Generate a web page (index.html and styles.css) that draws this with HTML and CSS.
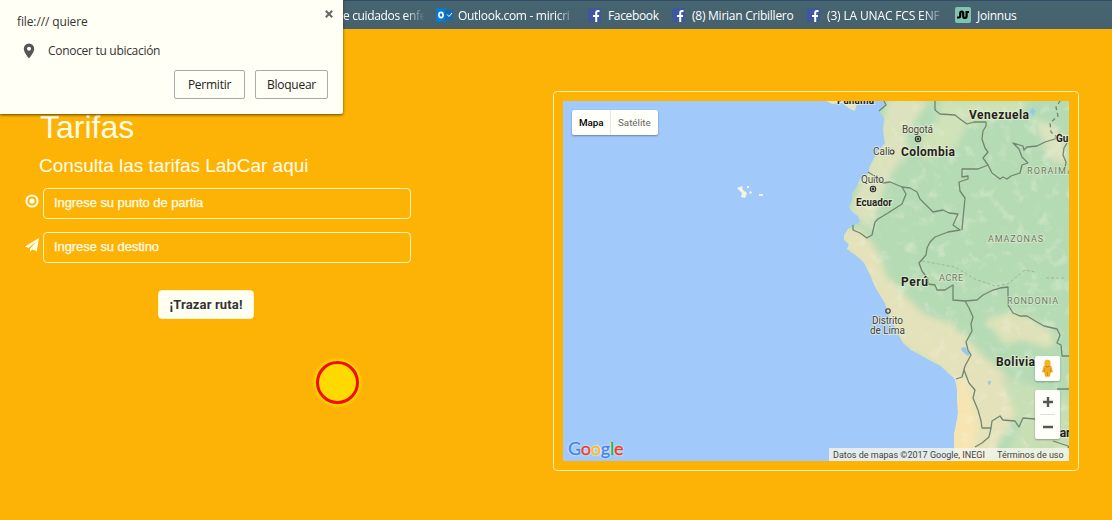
FILE: index.html
```html
<!DOCTYPE html>
<html lang="es">
<head>
<meta charset="utf-8">
<title>LabCar - Tarifas</title>
<link rel="stylesheet" href="styles.css">
</head>
<body>
<nav class="bookmarks">
  <span class="mark mark-nursing fade">e cuidados enfe</span>
  <span class="mark mark-outlook"><svg class="ico-outlook" viewBox="0 0 17 14"><rect width="10" height="14" fill="#0879cf"/><rect x="9" y="2" width="8" height="10" fill="#126ab2"/><ellipse cx="5" cy="7" rx="2.1" ry="2.6" fill="none" stroke="#fff" stroke-width="1.6"/><path d="M11 6.500l2 2 3-3.500" fill="none" stroke="#fff"/></svg><span class="fade">Outlook.com - miricri</span></span>
  <span class="mark mark-fb"><svg class="ico-fb" viewBox="0 0 13 14"><rect width="13" height="14" fill="#3f579b"/><path d="M11.500 3H10Q8.200 3 8.200 5V14M5 8H11" fill="none" stroke="#fff" stroke-width="2"/></svg><span>Facebook</span></span>
  <span class="mark mark-mirian"><svg class="ico-fb" viewBox="0 0 13 14"><rect width="13" height="14" fill="#3f579b"/><path d="M11.500 3H10Q8.200 3 8.200 5V14M5 8H11" fill="none" stroke="#fff" stroke-width="2"/></svg><span>(8) Mirian Cribillero</span></span>
  <span class="mark mark-unac"><svg class="ico-fb" viewBox="0 0 13 14"><rect width="13" height="14" fill="#3f579b"/><path d="M11.500 3H10Q8.200 3 8.200 5V14M5 8H11" fill="none" stroke="#fff" stroke-width="2"/></svg><span class="fade">(3) LA UNAC FCS ENF</span></span>
  <span class="mark mark-joinnus"><svg class="ico-join" viewBox="0 0 16 16"><rect width="16" height="16" rx="2" fill="#82c4b4"/><path d="M2 10.500H4Q5.200 10.500 5.200 9V6.500Q5.200 4.500 6.700 4.500T8.200 6.500V9Q8.200 11 9.900 11T11.600 9V5H14" fill="none" stroke="#000" stroke-width="2.200"/></svg><span>Joinnus</span></span>
</nav>

<main class="page">
  <section class="rates">
    <h1 class="title">Tarifas</h1>
    <p class="subtitle">Consulta las tarifas LabCar aqui</p>
    <div class="field">
      <svg class="field-icon" viewBox="0 0 14 14"><circle cx="7" cy="7" r="5.600" fill="none" stroke="#fffde5" stroke-width="2"/><circle cx="7" cy="7" r="2.600" fill="#fffde5"/></svg>
      <div class="input">Ingrese su punto de partia</div>
    </div>
    <div class="field">
      <svg class="field-icon" viewBox="0 0 14 14"><path d="M14 0L0 8.500L3.500 10L11.500 3.500L5 10.700V14L7.200 11.400L11.800 13.300Z" fill="#fffde5"/></svg>
      <div class="input">Ingrese su destino</div>
    </div>
    <button class="route">¡Trazar ruta!</button>
  </section>

  <section class="map-frame">
    <div class="map">
      <svg class="map-art" viewBox="563 101 506 360">
        <defs>
          <path id="land" d="M883 101L885 105L879 111L884 118L883 131L885 143L878 151L873 160L869 168L869 173L860 179L857 186L852 193L852 200L849 207L852 212L858 216L860 222L853 226L848 229L844 235L844 240L849 244L847 249L858 257L864 263L870 275L873 282L878 292L885 303L888 313L892 321L897 332L903 343L911 350L922 356L931 361L941 366L949 374L955 379L957 390L957 400L958 413L956 425L954 434L954 461H1069V101Z"/>
          <clipPath id="landclip"><use href="#land"/></clipPath>
          <filter id="soft" x="-20%" y="-20%" width="140%" height="140%"><feGaussianBlur stdDeviation="3"/></filter>
          <filter id="rough" x="0" y="0" width="100%" height="100%"><feTurbulence type="fractalNoise" baseFrequency="0.075" numOctaves="5" seed="7"/><feColorMatrix values="0 0 0 0 .92  0 0 0 0 .93  0 0 0 0 .78  4 0 0 0 -2.200"/></filter>
        </defs>
        <rect x="563" y="101" width="506" height="360" fill="#a1c9f9"/>
        <use href="#land" fill="#b5dbb5"/>
        <g clip-path="url(#landclip)">
          <g filter="url(#soft)">
            <path d="M890 95L930 100L905 135L910 150L890 175L880 200L870 230L850 210L875 150Z" fill="#dce2bd"/>
            <path d="M940 101H1030L1020 112L985 121L968 123L955 150L925 160L918 140L938 120Z" fill="#cfe2b8"/>
            <path d="M840 225L862 230L880 255L886 275L905 295L925 315L948 322L967 338L982 355L1010 378L1022 405L1010 425L985 465H945L955 380L895 340L865 270L840 245Z" fill="#e4e2ba"/>
            <path d="M985 320L1010 312L1030 318L1055 335L1050 348L1020 340L1005 345Z" fill="#dfe2b8"/>
            <path d="M1033 120L1055 125L1066 145L1068 165L1050 160L1043 140Z" fill="#dce3bf"/>
            <path d="M1000 375L1045 390L1069 400V461H1005L1020 425Z" fill="#c8dfb6"/>
            <path d="M954 379L967 383L978 425L971 461H948Z" fill="#f6e5b2"/>
          </g>
          <rect x="843" y="101" width="226" height="360" filter="url(#rough)" opacity=".3"/>
        </g>
        <path d="M826 101L832 104L842 103L850 109L855 111L856 106L863 101Z" fill="#e3e8c4"/>
        <path d="M737 188L742 186L743 190L747 193L745 198L741 197L742 193ZM739 186L741 187ZM750 191L752 192L751 194L749 193ZM747 186H749V188H747ZM759 194H763V196H759Z" fill="#f4f7dd"/>
        <path d="M961 348L965 347L970 354L968 356L962 351ZM988 381H991L990 385L988 384ZM1032 108L1036 111L1033 116L1030 112Z" fill="#98c5f2"/>
        <g class="borders">
          <path d="M879 111L886 105L884 101M935 101V110L940 114L955 115L960 119L967 124L974 122L986 122L986 126L983 131L982 139L985 148L988 152L983 158L988 165L978 169L962 169V177L968 176V179L959 182L960 191L965 198L963 219L962 230"/>
          <path d="M988 165L992 173L1000 179L1003 177L1007 179L1011 176L1020 173L1022 165L1028 163L1022 157L1019 149L1013 143L1023 146L1024 150L1027 147L1037 146L1045 142L1055 139L1060 133M1067 143L1064 148L1063 155L1066 162L1065 168"/>
          <path d="M868 172L876 177L883 183L890 182L895 184L902 187L910 188L917 192L920 199L927 206L933 212L943 210L949 213L958 214L953 225L960 230L948 232L935 237L930 242L927 248L926 255L919 263L922 271L928 279L928 284L935 285L937 290H945L953 285V300L965 301L969 308L973 317L971 324L972 331L966 342L968 350L971 355L965 366L962 377L956 379"/>
          <path d="M902 187L906 194L902 204L888 213L878 219L875 222L872 235L867 238L860 233L853 230V225M965 301L977 300L983 295L993 290L1000 288L1008 287L1008 305L1013 313L1020 316H1027L1037 322L1044 326L1057 329L1060 335L1057 343L1061 345L1062 356H1069"/>
          <path d="M964 370L969 383L975 390L973 398L978 410L981 421L982 428H991L989 437L982 443L975 447M991 428L992 421L1000 416L1003 420L1015 421L1019 427L1023 418L1035 419M1057 389H1069M1053 441L1068 446L1069 450"/>
          <path stroke-dasharray="4 3" d="M1058 138L1051 132L1050 123L1058 116L1056 107L1060 101"/>
          <path class="state" d="M922 261L955 267L975 279L995 286L1008 284L1025 270L1035 272M1046 278H1066"/>
        </g>
        <g class="dots"><circle cx="918" cy="139" r="2.700"/><circle cx="918" cy="139" r=".9"/><circle cx="873" cy="189" r="2.700"/><circle cx="873" cy="189" r=".9"/><circle cx="892" cy="152" r="2"/><circle cx="888" cy="311" r="2.200"/></g>
        <g class="labels">
          <g class="country">
            <text x="969" y="119" textLength="60">Venezuela</text>
            <text x="901" y="156" textLength="54">Colombia</text>
            <text x="901" y="286" textLength="27">Perú</text>
            <text x="996" y="366" textLength="39">Bolivia</text>
            <text class="small" x="856" y="206" textLength="36">Ecuador</text>
            <text class="small" x="837" y="104" textLength="37">Panamá</text>
            <text class="small" x="1056" y="142">Gu</text>
            <text x="1052" y="437">Par</text>
          </g>
          <g class="city">
            <text x="902" y="133" textLength="31">Bogotá</text>
            <text x="873" y="155" textLength="17">Cali</text>
            <text x="861" y="183" textLength="23">Quito</text>
            <text x="872" y="324" textLength="31">Distrito</text>
            <text x="870" y="334" textLength="35">de Lima</text>
          </g>
          <g class="region">
            <text x="1027" y="174" textLength="46">RORAIMA</text>
            <text x="988" y="242" textLength="55">AMAZONAS</text>
            <text x="939" y="281" textLength="24">ACRE</text>
            <text x="1007" y="304" textLength="51">RONDONIA</text>
          </g>
        </g>
      </svg>
      <div class="map-type"><span class="type-map">Mapa</span><span class="type-sat">Satélite</span></div>
      <div class="map-controls">
        <div class="pegman"><svg viewBox="0 0 14 20"><circle cx="7" cy="4" r="3.400" fill="#f5b51e"/><path d="M3 7H11L13 14H10.500L9.500 19H4.500L3.500 14H1Z" fill="#f3ac20"/><path d="M4 7Q7 10 10 7" fill="none" stroke="#c97918"/><path d="M4 10L3.500 14M10 10L10.500 14M7 14V18" stroke="#d58a13"/></svg></div>
        <div class="zoom"><svg viewBox="0 0 25 49"><path d="M8 12H18M13 7V17M8 37H18" stroke="#555" stroke-width="2.400"/><path d="M5 24.500H20" stroke="#ddd"/></svg></div>
      </div>
      <div class="google"><span class="g-blue">G</span><span class="g-red">o</span><span class="g-yellow">o</span><span class="g-blue">g</span><span class="g-green">l</span><span class="g-red">e</span></div>
      <div class="credits"><span class="credit-data">Datos de mapas ©2017 Google, INEGI</span><span class="credit-terms">Términos de uso</span></div>
    </div>
  </section>
</main>

<aside class="permission">
  <svg class="close" viewBox="0 0 8 8"><path d="M.8.8L7.200 7.200M7.200.8L.8 7.200" stroke="#666" stroke-width="2"/></svg>
  <p class="origin">file:/// quiere</p>
  <p class="request"><svg class="pin" viewBox="0 0 12 16"><path fill-rule="evenodd" d="M6 .5A5.200 5.200 0 0 0 .8 5.700C.8 9.500 6 15.500 6 15.500S11.200 9.500 11.200 5.700A5.200 5.200 0 0 0 6 .5ZM6 3.700A2 2 0 1 1 6 7.700A2 2 0 1 1 6 3.700Z" fill="#555"/></svg><span>Conocer tu ubicación</span></p>
  <div class="actions"><button class="allow">Permitir</button><button class="block">Bloquear</button></div>
</aside>
<div class="cursor-ring"></div>
</body>
</html>
```
FILE: styles.css
```css
* { box-sizing: border-box; }
body { margin: 0; width: 1112px; height: 520px; overflow: hidden; position: relative; background: #fdb206; font-family: "Liberation Sans", Arial, sans-serif; color: #fffde8; }
h1, p { margin: 0; }
svg { display: block; flex: none; }
button { padding: 0; cursor: pointer; }

.bookmarks { height: 29px; padding: 0 0 0 343px; display: flex; align-items: center; background: linear-gradient(#456670, #47606e); border-top: 1px solid #354a68; font: 12px "Open Sans", "Noto Sans", sans-serif; letter-spacing: -.15px; color: #fff; white-space: nowrap; }
.mark { display: flex; align-items: center; flex: none; overflow: hidden; }
.fade { overflow: hidden; -webkit-mask-image: linear-gradient(to right, #000 calc(100% - 20px), transparent); mask-image: linear-gradient(to right, #000 calc(100% - 20px), transparent); }
.mark-nursing { width: 82px; margin-right: 11px; letter-spacing: -.35px; }
.mark-outlook { width: 152px; gap: 5px; }
.mark-outlook .fade { width: 118px; letter-spacing: -.3px; }
.mark-fb { width: 84px; gap: 7px; letter-spacing: -.35px; }
.mark-mirian { width: 135px; gap: 7px; letter-spacing: -.25px; }
.mark-unac { width: 148px; gap: 7px; }
.mark-unac .fade { width: 117px; }
.mark-joinnus { gap: 6px; letter-spacing: -.25px; }
.ico-outlook { width: 17px; height: 14px; }
.ico-fb { width: 13px; height: 14px; }
.ico-join { width: 16px; height: 16px; }

.page { display: grid; grid-template-columns: 553px 526px; align-items: start; }
.rates { padding: 79px 0 0 25px; display: flex; flex-direction: column; align-items: flex-start; }
.title { margin-left: 15px; font-size: 32px; line-height: 38px; font-weight: 400; }
.subtitle { margin: 8px 0 10px 14px; font-size: 19px; line-height: 24px; letter-spacing: -.03px; }
.field { display: flex; gap: 4px; margin-bottom: 13px; }
.field-icon { width: 14px; height: 14px; margin-top: 6px; }
.input { width: 368px; height: 31px; padding: 0 10px; border: 1px solid #fff6b0; border-radius: 4px; font-size: 13px; line-height: 28px; letter-spacing: -.07px; -webkit-text-stroke: .25px #fffde8; }
.route { width: 96px; height: 29px; margin: 14px 0 0 133px; border: 1px solid #fff5c2; border-radius: 4px; background: #fffff2; color: #333; font: bold 13px Roboto, sans-serif; letter-spacing: .15px; }

.map-frame { height: 380px; margin-top: 62px; padding: 9px; border: 1px solid #fff3a8; border-radius: 4px; }
.map { position: relative; width: 506px; height: 360px; overflow: hidden; font-family: Roboto, sans-serif; }
.map-art { width: 506px; height: 360px; }
.borders { fill: none; stroke: #71866f; stroke-width: 1.3; stroke-linejoin: round; }
.borders .state { stroke: #94ae95; stroke-width: .8; stroke-dasharray: 3 2; }
.dots { fill: none; stroke: #333; stroke-width: 1.1; }
.labels { paint-order: stroke; stroke: #eef1d5; stroke-opacity: .6; stroke-width: 2; fill: #222; }
.country { font: bold 12px Roboto, sans-serif; }
.small { font-size: 10px; }
.city { font: 10px Roboto, sans-serif; fill: #444; }
.region { font: 9px Roboto, sans-serif; fill: #687a69; stroke-width: 1.5; }

.map-type { position: absolute; left: 9px; top: 9px; width: 86px; height: 25px; display: flex; align-items: center; background: #fffffa; border-radius: 2px; box-shadow: 0 1px 2px rgba(0, 0, 0, .35); font-size: 9.8px; color: #666; }
.type-map { width: 39px; height: 25px; padding-left: 7px; border-right: 1px solid #e7e7e7; line-height: 25px; font-weight: 500; color: #000; }
.type-sat { padding-left: 7px; }
.map-controls { position: absolute; left: 472px; top: 255px; display: grid; gap: 9px; }
.pegman, .zoom { width: 25px; background: #fffffa; border-radius: 2px; box-shadow: 0 1px 2px rgba(0, 0, 0, .3); }
.pegman { height: 25px; padding: 3px 6px; }
.pegman svg { width: 13px; height: 19px; }
.zoom { height: 49px; }
.google { position: absolute; left: 5px; bottom: 2px; font: 18px/22px Lato, sans-serif; letter-spacing: -.2px; -webkit-text-stroke: .5px; text-shadow: 0 0 1px #fff, 0 0 2px #fff, 0 0 2px #fff; }
.g-blue { color: #4285f4; }
.g-red { color: #df4335; }
.g-yellow { color: #f5b91d; }
.g-green { color: #34a853; }
.credits { position: absolute; right: 0; bottom: 0; width: 240px; height: 13px; padding-left: 4px; display: flex; align-items: center; background: rgba(245, 245, 234, .8); color: #444; font-size: 9px; white-space: nowrap; }
.credit-data { width: 164px; }

.permission { position: absolute; left: 0; top: 0; width: 343px; height: 114px; padding: 13px 15px 0 17px; background: #fffff5; border-radius: 0 0 2px 0; box-shadow: 0 1px 3px rgba(60, 40, 0, .8); color: #333; font: 12px/18px "Open Sans", "Noto Sans", sans-serif; letter-spacing: -.3px; }
.origin { letter-spacing: -.12px; }
.close { position: absolute; left: 325px; top: 10px; width: 8px; height: 8px; }
.request { display: flex; align-items: center; gap: 13px; margin: 11px 0 10px 6px; }
.pin { width: 12px; height: 16px; }
.actions { display: flex; justify-content: flex-end; gap: 10px; }
.actions button { height: 29px; padding-bottom: 1px; border: 1px solid #aaa; border-radius: 2px; background: transparent; color: #222; font: 12px "Open Sans", "Noto Sans", sans-serif; letter-spacing: -.25px; }
.allow { width: 71px; }
.block { width: 73px; }
.cursor-ring { position: absolute; left: 316px; top: 361px; width: 43px; height: 43px; border: 3px solid #f30b05; border-radius: 50%; background: #ffda00; box-shadow: 0 0 3px 2px #ffdc00; }
```
